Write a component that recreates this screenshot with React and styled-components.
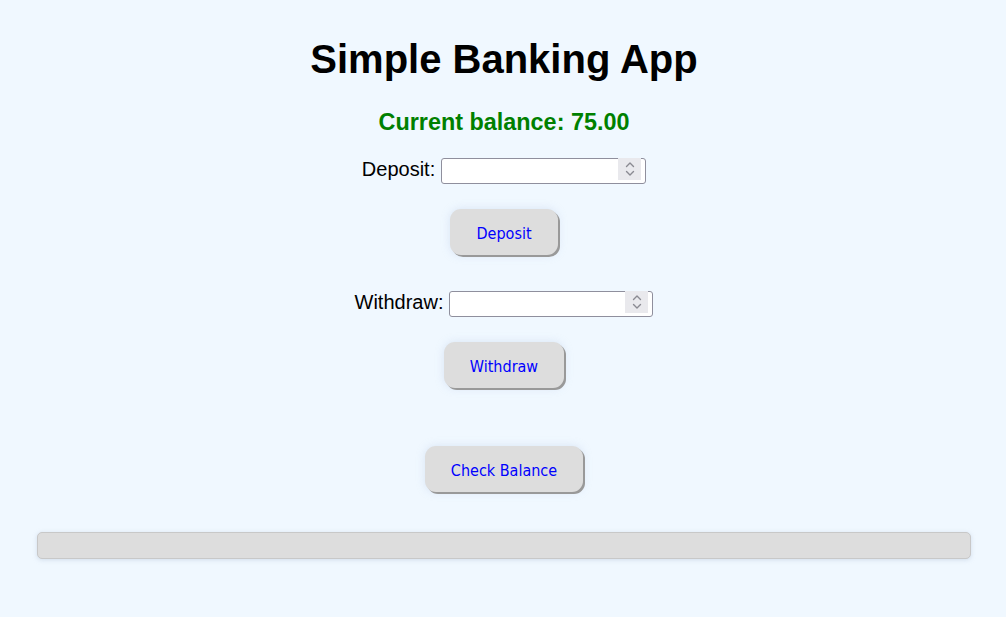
import React from "react";
import styled, { createGlobalStyle } from "styled-components";

const Global = createGlobalStyle`
  html, body { margin: 0; padding: 0; background: #f0f8ff; }
  body { font-family: "Liberation Sans", Arial, sans-serif; color: #000; }
`;

const Page = styled.div`
  min-height: 617px;
  box-sizing: border-box;
  padding: 36px 35px 0 37px;
  display: flex;
  flex-direction: column;
  align-items: center;
`;

const Title = styled.h1`
  margin: 0;
  font-size: 40px;
  line-height: 46px;
  font-weight: bold;
`;

const Balance = styled.div`
  margin-top: 27px;
  font-size: 23.4px;
  line-height: 26px;
  font-weight: bold;
  color: #008000;
`;

const Row = styled.div`
  margin-top: ${(p) => p.$mt}px;
  display: flex;
  align-items: center;
  gap: 6px;
  font-size: 20px;
  line-height: 26px;
`;

const Field = styled.span`
  position: relative;
  display: inline-block;
  width: ${(p) => p.$w}px;
  height: 26px;
`;

const Input = styled.input`
  box-sizing: border-box;
  width: 100%;
  height: 26px;
  border: 1px solid #8f8f9d;
  border-radius: 3px;
  background: #fff;
  padding: 0 4px;
  font: 16px "Liberation Sans", Arial, sans-serif;
  &::-webkit-inner-spin-button,
  &::-webkit-outer-spin-button { -webkit-appearance: none; margin: 0; }
`;

const Spin = styled.span`
  position: absolute;
  right: 5px;
  top: 2px;
  width: 23px;
  height: 22px;
  background: #e9e9ed;
  display: flex;
  align-items: center;
  justify-content: center;
  pointer-events: none;
`;

const Button = styled.button`
  margin-top: ${(p) => p.$mt}px;
  box-sizing: border-box;
  height: 46px;
  padding: 3px 26px 0;
  border: none;
  border-radius: 11px;
  background: #dddddd;
  color: #0000ff;
  font-family: "DejaVu Sans Condensed", "DejaVu Sans", Verdana, sans-serif;
  font-stretch: condensed;
  font-size: 16px;
  box-shadow: 2px 2px 0 #999, 0 0 8px rgba(205, 220, 240, 0.7);
  cursor: pointer;
`;

const Bar = styled.div`
  margin-top: 40px;
  align-self: stretch;
  height: 27px;
  box-sizing: border-box;
  background: #dddddd;
  border: 1px solid #c8c8c8;
  border-radius: 5px;
  box-shadow: 0 1px 4px rgba(180, 195, 215, 0.5);
`;

const Chevrons = () => (
  <svg width="12" height="16" viewBox="0 0 12 16" fill="none" stroke="#8a8a92" strokeWidth="1.4" strokeLinecap="round" strokeLinejoin="round">
    <path d="M2.5 5.5 L6 2 L9.5 5.5" />
    <path d="M2.5 10.5 L6 14 L9.5 10.5" />
  </svg>
);

const NumberField = ({ w }) => (
  <Field $w={w}>
    <Input type="number" />
    <Spin><Chevrons /></Spin>
  </Field>
);

export default function App() {
  return (
    <>
      <Global />
      <Page>
        <Title>Simple Banking App</Title>
        <Balance>Current balance: 75.00</Balance>
        <Row $mt={21}>
          <span>Deposit:</span>
          <NumberField w={205} />
        </Row>
        <Button $mt={27}>Deposit</Button>
        <Row $mt={34}>
          <span>Withdraw:</span>
          <NumberField w={204} />
        </Row>
        <Button $mt={27}>Withdraw</Button>
        <Button $mt={58}>Check Balance</Button>
        <Bar />
      </Page>
    </>
  );
}
